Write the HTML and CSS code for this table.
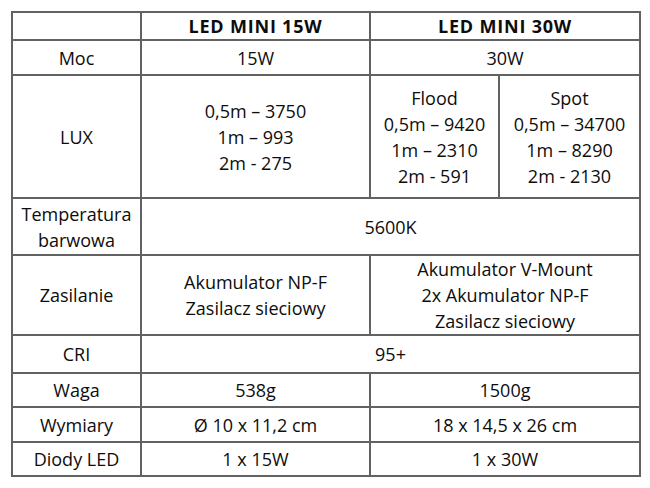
FILE: index.html
```html
<!DOCTYPE html>
<html lang="pl">
<head>
<meta charset="utf-8">
<title>LED MINI</title>
<link rel="stylesheet" href="styles.css">
</head>
<body>
<table class="spec">
  <colgroup>
    <col class="c-label">
    <col class="c-15">
    <col class="c-flood">
    <col class="c-spot">
  </colgroup>
  <tr class="r-head">
    <th></th>
    <th>LED MINI 15W</th>
    <th colspan="2">LED MINI 30W</th>
  </tr>
  <tr class="r-moc">
    <td>Moc</td>
    <td>15W</td>
    <td colspan="2">30W</td>
  </tr>
  <tr class="r-lux">
    <td>LUX</td>
    <td>0,5m – 3750<br>1m – 993<br>2m - 275</td>
    <td>Flood<br>0,5m – 9420<br>1m – 2310<br>2m - 591</td>
    <td>Spot<br>0,5m – 34700<br>1m – 8290<br>2m - 2130</td>
  </tr>
  <tr class="r-temp">
    <td>Temperatura<br>barwowa</td>
    <td colspan="3">5600K</td>
  </tr>
  <tr class="r-zas">
    <td>Zasilanie</td>
    <td>Akumulator NP-F<br>Zasilacz sieciowy</td>
    <td colspan="2">Akumulator V-Mount<br>2x Akumulator NP-F<br>Zasilacz sieciowy</td>
  </tr>
  <tr class="r-cri">
    <td>CRI</td>
    <td colspan="3">95+</td>
  </tr>
  <tr class="r-waga">
    <td>Waga</td>
    <td>538g</td>
    <td colspan="2">1500g</td>
  </tr>
  <tr class="r-wym">
    <td>Wymiary</td>
    <td>Ø 10 x 11,2 cm</td>
    <td colspan="2">18 x 14,5 x 26 cm</td>
  </tr>
  <tr class="r-diody">
    <td>Diody LED</td>
    <td>1 x 15W</td>
    <td colspan="2">1 x 30W</td>
  </tr>
</table>
</body>
</html>
```

FILE: styles.css
```css
html, body {
  margin: 0;
  padding: 0;
  background: #ffffff;
}
body {
  font-family: "Open Sans", "Noto Sans", "Liberation Sans", sans-serif;
  font-size: 18px;
  color: #0d0d0d;
}
.spec {
  margin: 11px 0 0 11px;
  border-collapse: collapse;
  table-layout: fixed;
  width: 629px;
}
.c-label { width: 129px; }
.c-15 { width: 229px; }
.c-flood { width: 129px; }
.c-spot { width: 141px; }
.spec th,
.spec td {
  border: 2px solid #626262;
  padding: 0;
  text-align: center;
  vertical-align: middle;
  line-height: 26px;
  font-weight: 400;
}
.spec th {
  font-weight: 700;
  letter-spacing: 0.8px;
}
.r-head { height: 27px; }
.r-moc { height: 35px; }
.r-lux { height: 123px; }
.r-temp { height: 57px; }
.r-zas { height: 80px; }
.r-cri { height: 38px; }
.r-waga { height: 34px; }
.r-wym { height: 35px; }
.r-diody { height: 34px; }
```
